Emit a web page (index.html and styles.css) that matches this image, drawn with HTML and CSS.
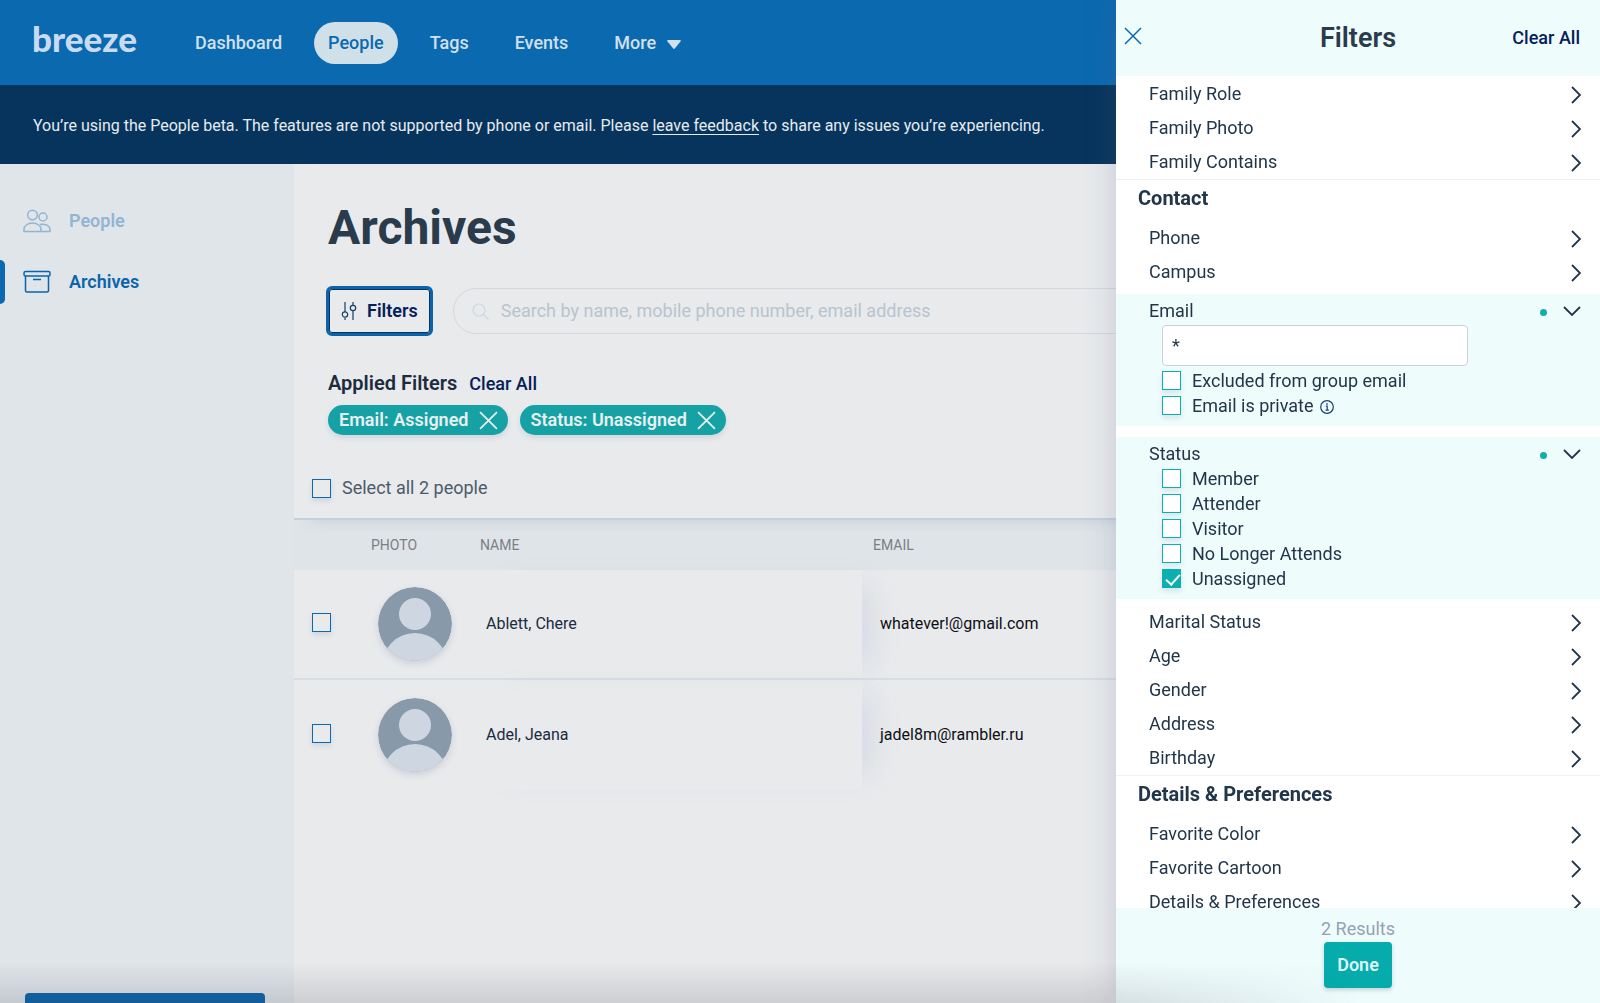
FILE: index.html
```html
<!DOCTYPE html>
<html lang="en">
<head>
<meta charset="utf-8">
<meta name="viewport" content="width=device-width, initial-scale=1">
<title>Archives - Breeze</title>
<link rel="stylesheet" href="styles.css">
</head>
<body>
<svg class="sprite" aria-hidden="true">
  <symbol id="close" viewBox="0 0 18 18"><path d="M1 1l16 16M17 1L1 17"/></symbol>
  <symbol id="right" viewBox="0 0 10 18"><path d="M1 1l8 8-8 8"/></symbol>
  <symbol id="down" viewBox="0 0 18 10"><path d="M1 1l8 8 8-8"/></symbol>
  <symbol id="avatar" viewBox="0 0 74 74">
    <clipPath id="disc"><circle cx="37" cy="37" r="37"/></clipPath>
    <g clip-path="url(#disc)">
      <rect width="74" height="74" fill="#8899a9"/>
      <circle cx="37" cy="27" r="16" fill="#ced7e1"/>
      <circle cx="37" cy="79" r="33" fill="#ced7e1"/>
    </g>
  </symbol>
</svg>

<div class="app">
  <header class="topbar">
    <a class="logo" href="#">breeze</a>
    <nav class="nav">
      <a href="#">Dashboard</a>
      <a class="current" href="#">People</a>
      <a href="#">Tags</a>
      <a href="#">Events</a>
      <a href="#">More <svg class="caret" viewBox="0 0 14 9" aria-hidden="true"><path d="M1 0h12q1.300 0.500 .5 1.500L8 8.300q-1 1-2 0L.5 1.500Q-.3.500 1 0z"/></svg></a>
    </nav>
  </header>
  <p class="banner">You’re using the People beta. The features are not supported by phone or email. Please <a href="#">leave feedback</a> to share any issues you’re experiencing.</p>

  <div class="body">
    <aside class="sidebar">
      <a class="side-link faded" href="#">
        <svg class="side-icon" viewBox="0 0 28 24" aria-hidden="true"><circle cx="9.500" cy="6" r="4.800"/><circle cx="20" cy="8" r="4"/><path d="M1 22.500v-2c0-4 4-6.500 8.500-6.500s8.500 2.500 8.500 6.500v2zM17 15.600c5-1.200 10 1 10 5v1.900h-9"/></svg>
        People
      </a>
      <a class="side-link active" href="#">
        <svg class="side-icon" viewBox="0 0 28 24" aria-hidden="true"><rect x="1" y="1.500" width="26" height="4.500" rx="1.500"/><path d="M2.500 6v14.500q0 1.500 1.500 1.500h20q1.500 0 1.500-1.500V6M10 9.500h8"/></svg>
        Archives
      </a>
      <button class="side-action" type="button" aria-label="Add Person"></button>
    </aside>

    <main class="main">
      <section class="tools">
        <h1>Archives</h1>
        <div class="search-row">
          <button class="filter-btn" type="button">
            <svg class="sliders" viewBox="0 0 16 20" aria-hidden="true"><path d="M4 1v10M4 17v2M12 1v3M12 10v9"/><circle cx="4" cy="13.500" r="2.700"/><circle cx="12" cy="7" r="2.700"/></svg>
            Filters
          </button>
          <label class="search">
            <svg class="lens" viewBox="0 0 17 17" aria-hidden="true"><circle cx="7" cy="7" r="6"/><path d="M11.500 11.500l5 5"/></svg>
            <input type="search" aria-label="Search people" placeholder="Search by name, mobile phone number, email address">
          </label>
        </div>
        <div class="applied">
          <h2>Applied Filters</h2>
          <button class="link" type="button">Clear All</button>
        </div>
        <div class="chips">
          <button class="chip" type="button">Email: Assigned <svg class="x" aria-hidden="true"><use href="#close"/></svg></button>
          <button class="chip" type="button">Status: Unassigned <svg class="x" aria-hidden="true"><use href="#close"/></svg></button>
        </div>
        <label class="select-all"><input class="box" type="checkbox"> Select all 2 people</label>
      </section>
      <table class="people">
        <thead>
          <tr><th class="c-pick" aria-label="Select"></th><th class="c-photo">Photo</th><th class="c-name">Name</th><th>Email</th></tr>
        </thead>
        <tbody>
          <tr><td class="c-pick"><input class="box" type="checkbox" aria-label="Select Ablett, Chere"></td><td class="c-photo"><svg class="avatar" aria-hidden="true"><use href="#avatar"/></svg></td><td class="c-name">Ablett, Chere</td><td class="c-mail">whatever!@gmail.com</td></tr>
          <tr><td class="c-pick"><input class="box" type="checkbox" aria-label="Select Adel, Jeana"></td><td class="c-photo"><svg class="avatar" aria-hidden="true"><use href="#avatar"/></svg></td><td class="c-name">Adel, Jeana</td><td class="c-mail">jadel8m@rambler.ru</td></tr>
        </tbody>
      </table>
    </main>
  </div>
</div>

<aside class="drawer" aria-label="Filters">
  <header class="drawer-head">
    <button class="close" type="button" aria-label="Close"><svg class="x" aria-hidden="true"><use href="#close"/></svg></button>
    <h2>Filters</h2>
    <button class="link" type="button">Clear All</button>
  </header>
  <div class="drawer-list">
    <section class="group">
      <button class="item" type="button">Family Role <svg class="right" aria-hidden="true"><use href="#right"/></svg></button>
      <button class="item" type="button">Family Photo <svg class="right" aria-hidden="true"><use href="#right"/></svg></button>
      <button class="item" type="button">Family Contains <svg class="right" aria-hidden="true"><use href="#right"/></svg></button>
    </section>
    <section class="group">
      <h3>Contact</h3>
      <button class="item" type="button">Phone <svg class="right" aria-hidden="true"><use href="#right"/></svg></button>
      <button class="item" type="button">Campus <svg class="right" aria-hidden="true"><use href="#right"/></svg></button>
      <div class="open">
        <button class="item-open" type="button" aria-expanded="true">Email <span class="dot"></span><svg class="down" aria-hidden="true"><use href="#down"/></svg></button>
        <input class="value" type="text" value="*" aria-label="Email">
        <label class="check"><input class="box teal" type="checkbox"> Excluded from group email</label>
        <label class="check"><input class="box teal" type="checkbox"> Email is private <svg class="info" viewBox="0 0 14 14" aria-hidden="true"><circle cx="7" cy="7" r="6.300"/><path d="M5.800 6.200H7.200v4M5.600 10.200h3.200"/><path d="M7 3.300v1.500" stroke-width="1.500"/></svg></label>
      </div>
      <div class="open">
        <button class="item-open" type="button" aria-expanded="true">Status <span class="dot"></span><svg class="down" aria-hidden="true"><use href="#down"/></svg></button>
        <label class="check"><input class="box teal" type="checkbox"> Member</label>
        <label class="check"><input class="box teal" type="checkbox"> Attender</label>
        <label class="check"><input class="box teal" type="checkbox"> Visitor</label>
        <label class="check"><input class="box teal" type="checkbox"> No Longer Attends</label>
        <label class="check"><input class="box teal" type="checkbox" checked> Unassigned</label>
      </div>
      <button class="item" type="button">Marital Status <svg class="right" aria-hidden="true"><use href="#right"/></svg></button>
      <button class="item" type="button">Age <svg class="right" aria-hidden="true"><use href="#right"/></svg></button>
      <button class="item" type="button">Gender <svg class="right" aria-hidden="true"><use href="#right"/></svg></button>
      <button class="item" type="button">Address <svg class="right" aria-hidden="true"><use href="#right"/></svg></button>
      <button class="item" type="button">Birthday <svg class="right" aria-hidden="true"><use href="#right"/></svg></button>
    </section>
    <section class="group">
      <h3>Details &amp; Preferences</h3>
      <button class="item" type="button">Favorite Color <svg class="right" aria-hidden="true"><use href="#right"/></svg></button>
      <button class="item" type="button">Favorite Cartoon <svg class="right" aria-hidden="true"><use href="#right"/></svg></button>
      <button class="item" type="button">Details &amp; Preferences <svg class="right" aria-hidden="true"><use href="#right"/></svg></button>
    </section>
  </div>
  <footer class="drawer-foot">
    <span>2 Results</span>
    <button class="done" type="button">Done</button>
  </footer>
</aside>
<div class="shade"></div>
</body>
</html>
```
FILE: styles.css
```css
* { box-sizing: border-box; }
body {
  margin: 0;
  font-family: Roboto, "Liberation Sans", sans-serif;
  font-size: 18px;
  line-height: 24px;
  color: #22364a;
  background: #e8eaec;
}
h1, h2, h3, p { margin: 0; }
a { color: inherit; text-decoration: none; }
button, input { font: inherit; color: inherit; }
button { padding: 0; border: 0; background: none; text-align: left; cursor: pointer; }
svg { flex: none; fill: none; stroke: currentColor; }
.sprite { position: absolute; width: 0; height: 0; }

.app { display: flex; flex-direction: column; height: 100vh; overflow: hidden; }

.topbar {
  display: flex;
  align-items: center;
  gap: 40px;
  height: 85px;
  flex: none;
  padding: 0 32px;
  background: #0b69b0;
  color: #d0e0ec;
}
.logo { width: 109px; padding-bottom: 10px; font: 900 35px/40px Lato, sans-serif; color: #c9dbf0; }
.nav { display: flex; gap: 18px; font-weight: 500; }
.nav a { display: flex; align-items: center; gap: 11px; height: 42px; padding: 0 14px; border-radius: 21px; }
.nav .current { background: #cfe0e9; color: #0b69b0; }
.caret { width: 14px; height: 9px; fill: currentColor; stroke: none; margin-top: 3px; }

.banner {
  flex: none;
  height: 79px;
  padding: 29px 33px 26px;
  background: #06345d;
  color: #e6ebef;
  font-size: 16px;
}
.banner a { text-decoration: underline; text-underline-offset: 3px; }

.body { display: flex; flex: 1; min-height: 0; }
.sidebar {
  display: flex;
  flex-direction: column;
  gap: 17px;
  width: 294px;
  flex: none;
  padding-top: 35px;
  background: #dfe5e9;
  color: #0b64ab;
  font-weight: 600;
  overflow: hidden;
}
.side-link { display: flex; align-items: center; gap: 18px; height: 44px; padding-left: 23px; }
.faded { color: #93b5d2; }
.side-icon { width: 28px; height: 24px; stroke-width: 1.500; }
.active { position: relative; }
.active::before { content: ""; position: absolute; left: 0; top: 0; width: 5px; height: 44px; background: #0b69b0; border-radius: 0 6px 6px 0; }
.side-action { flex: none; height: 44px; margin: auto 29px -34px 25px; border-radius: 4px; background: #0b64ab; }

.main { flex: 1; min-width: 0; }
.tools { position: relative; border-bottom: 2px solid #c6d0da; padding: 36px 18px 18px; box-shadow: 12px 5px 12px -4px rgba(150, 165, 195, .3); }
h1 { padding-left: 16px; font-size: 48px; line-height: 56px; font-weight: 700; color: #2a3b4c; }
.search-row { display: flex; align-items: center; gap: 20px; padding: 30px 0 0 14px; }
.filter-btn {
  display: flex;
  align-items: center;
  gap: 10px;
  height: 50px;
  padding: 0 12px;
  border: 3px solid #0b64ab;
  border-radius: 6px;
  box-shadow: inset 0 0 0 1px #06345d;
  color: #06205a;
  font-weight: 600;
}
.sliders { width: 16px; height: 20px; stroke: #17406b; stroke-width: 1.200; }
.search { display: flex; align-items: center; gap: 12px; flex: 1; height: 46px; padding: 0 18px; border: 1px solid #d2d9e1; border-radius: 23px; color: #d0d7e0; }
.lens { width: 17px; height: 17px; stroke-width: 1.200; }
.search input { flex: 1; min-width: 0; border: 0; padding: 0; outline: 0; background: none; }
.search input::placeholder { color: #b9c4cf; opacity: 1; }
.applied { display: flex; align-items: baseline; gap: 12px; padding: 35px 0 9px 16px; }
.applied h2 { font-size: 20px; line-height: 24px; font-weight: 600; color: #1c2c3d; }
.link { color: #06205a; font-weight: 500; }
.chips { display: flex; gap: 12px; padding-left: 16px; }
.chip {
  display: flex;
  align-items: center;
  gap: 10px;
  height: 30px;
  padding: 0 10px 0 11px;
  border-radius: 15px;
  background: #16a1a4;
  color: #e6f0f1;
  font-weight: 600;
  box-shadow: 0 3px 5px rgba(120, 135, 165, .2);
}
.x { width: 19px; height: 19px; stroke-width: 1.700; }
.select-all { display: flex; align-items: center; gap: 11px; padding-top: 41px; color: #4c5a68; }
.box {
  appearance: none;
  width: 19px;
  height: 19px;
  flex: none;
  margin: 0;
  border: 1px solid #0b69b0;
  box-shadow: 0 3px 5px rgba(120, 135, 165, .2);
}

.people { width: 100%; border-collapse: separate; border-spacing: 0; table-layout: fixed; font-size: 16px; }
.people thead { background: #dfe4e8; }
th { height: 50px; padding: 0 0 0 11px; font-size: 14px; font-weight: 400; text-align: left; text-transform: uppercase; color: #7b7f84; }
td { height: 110px; padding: 0; }
tbody tr:not(:last-child) td { border-bottom: 2px solid #d6dde3; }
.c-pick { width: 66px; }
.c-photo { width: 109px; }
td.c-pick { padding: 0 0 4px 18px; }
td.c-photo { padding-left: 18px; }
td.c-name { padding-left: 17px; box-shadow: 24px 0 28px -16px rgba(150, 160, 195, .22); color: #1b2b40; }
.c-name { width: 393px; }
td.c-mail { padding-left: 18px; color: #0c0f14; }
td .box { display: block; }
.avatar { display: block; width: 74px; height: 74px; stroke: none; border-radius: 50%; box-shadow: 0 3px 6px rgba(120, 135, 165, .25); }

.drawer {
  position: fixed;
  top: 0;
  right: 0;
  bottom: 0;
  width: 484px;
  display: flex;
  flex-direction: column;
  background: #fff;
  box-shadow: 0 0 30px rgba(90, 100, 130, .25);
}
.drawer-head {
  display: grid;
  grid-template-columns: 1fr auto 1fr;
  align-items: center;
  height: 76px;
  flex: none;
  padding: 0 20px;
  background: #effcfc;
}
.drawer-head h2 { font-size: 27px; line-height: 32px; font-weight: 600; color: #2a3b4c; }
.drawer-head .link { justify-self: end; }
.close { justify-self: start; margin-left: -12px; padding-bottom: 4px; color: #0b69b0; line-height: 0; }
.close .x { width: 18px; height: 18px; stroke-width: 1.500; }
.drawer-list { flex: 1; min-height: 0; overflow-y: auto; scrollbar-width: none; padding-top: 1px; }
.group + .group { border-top: 1px solid #edf1f4; }
h3 { height: 41px; padding: 6px 22px 0; font-size: 20px; line-height: 24px; font-weight: 700; }
.item { display: flex; align-items: center; justify-content: space-between; width: 100%; height: 34px; padding: 0 19px 0 33px; }
.right { width: 10px; height: 18px; margin-top: 2px; stroke-width: 1.800; }
.down { width: 18px; height: 10px; stroke-width: 1.800; }
.open { display: flex; flex-direction: column; align-items: flex-start; padding: 4px 19px 8px 33px; margin: 5px 0 11px; background: #effcfc; }
.open + .open { margin: 0 0 6px; }
.item-open { display: flex; align-items: center; width: 100%; height: 25px; }
.dot { width: 7px; height: 7px; margin: 4px 16px 0 auto; border-radius: 50%; background: #0ab0af; }
.value { width: 306px; height: 41px; margin: 2px 0 2px 13px; padding: 0 9px; border: 1px solid #c9d3e0; border-radius: 4px; background: #fff; }
.check { display: flex; align-items: center; height: 25px; margin-left: 13px; gap: 11px; }
.box.teal { border-color: #0ab0af; background: #fff; }
.box.teal:checked { position: relative; background: #0ab0af; }
.box.teal:checked::after { content: ""; position: absolute; left: 6px; top: 1px; width: 6px; height: 12px; border: solid #fff; border-width: 0 2px 2px 0; transform: rotate(42deg); }
.info { width: 14px; height: 14px; margin: 3px 0 0 -5px; stroke: #173f78; stroke-width: 1.200; }
.drawer-foot { display: flex; flex-direction: column; align-items: center; gap: 1px; height: 95px; flex: none; padding-top: 9px; background: #effcfc; color: #94a3b4; }
.done { height: 46px; padding: 0 13px; border-radius: 4px; background: #06abab; color: #dff6f6; font-weight: 600; box-shadow: 0 2px 4px rgba(90, 110, 140, .3); }
.shade { position: fixed; left: 0; right: 240px; bottom: 0; height: 40px; pointer-events: none; background: linear-gradient(transparent, rgba(60, 60, 70, .16)); mask-image: linear-gradient(to right, #000 80%, transparent); }
```
